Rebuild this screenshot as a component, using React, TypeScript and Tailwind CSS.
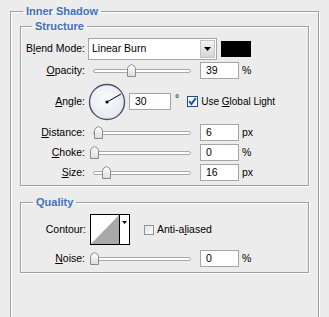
import React from 'react';

const font = { fontFamily: '"Liberation Sans", Arial, sans-serif' };

function Thumb({ left }: { left: number }) {
  return (
    <svg
      width="9"
      height="13"
      viewBox="0 0 9 13"
      className="absolute top-[1px]"
      style={{ left: left - 4 }}
    >
      <defs>
        <linearGradient id="thumbFill" x1="0" y1="0" x2="0" y2="1">
          <stop offset="0" stopColor="#ffffff" />
          <stop offset="1" stopColor="#dcdcdc" />
        </linearGradient>
      </defs>
      <path
        d="M0.5 12.5 L0.5 4.5 Q0.5 2 4.5 0.5 Q8.5 2 8.5 4.5 L8.5 12.5 Z"
        fill="url(#thumbFill)"
        stroke="#8a8a8a"
      />
    </svg>
  );
}

function Slider({ thumb }: { thumb: number }) {
  // thumb is the x position of the thumb centre, relative to the track start
  return (
    <div className="relative w-[106px] h-[15px] flex items-center">
      <div className="ml-[4px] w-[98px] h-[4px] rounded-full border border-[#a8a8a8] bg-white" />
      <Thumb left={4 + thumb} />
    </div>
  );
}

function NumBox({ value, w = 'w-[39px]' }: { value: string; w?: string }) {
  return (
    <div className={`${w} h-[17px] bg-white border border-[#a3a5aa] pl-[5px] flex items-center leading-none`}>
      {value}
    </div>
  );
}

function Label({ children, w = 'w-[64px]' }: { children: React.ReactNode; w?: string }) {
  return <div className={`${w} shrink-0 text-right`}>{children}</div>;
}

function SliderRow({
  label,
  thumb,
  value,
  unit,
}: {
  label: React.ReactNode;
  thumb: number;
  value: string;
  unit: string;
}) {
  return (
    <div className="flex items-center h-[17px]">
      <Label>{label}</Label>
      <div className="ml-[4px]">
        <Slider thumb={thumb} />
      </div>
      <div className="ml-[5px]">
        <NumBox value={value} />
      </div>
      <span className="ml-[3px]">{unit}</span>
    </div>
  );
}

function Legend({ children, className = '' }: { children: React.ReactNode; className?: string }) {
  return (
    <legend className={`px-[3px] text-[11px] font-bold leading-[14px] text-[#4470bc] ${className}`}>
      {children}
    </legend>
  );
}

const etched = 'border border-[#a0a0a0] shadow-[inset_1px_1px_0_#ffffff,1px_1px_0_#ffffff]';

function AngleDial() {
  return (
    <svg width="38" height="38" viewBox="0 0 38 38">
      <defs>
        <radialGradient id="dial" cx="0.45" cy="0.4" r="0.6">
          <stop offset="0" stopColor="#fbfbfb" />
          <stop offset="1" stopColor="#e6e8ee" />
        </radialGradient>
      </defs>
      <circle cx="19" cy="19" r="17.5" fill="url(#dial)" stroke="#46556f" strokeWidth="1.4" />
      <line x1="19" y1="19" x2="33" y2="11" stroke="#000" strokeWidth="1" />
      <circle cx="19" cy="19" r="1.6" fill="#000" />
    </svg>
  );
}

function CheckedBox() {
  return (
    <svg width="11" height="11" viewBox="0 0 11 11">
      <rect x="0.5" y="0.5" width="10" height="10" fill="#f6f8fb" stroke="#1d4f8a" />
      <path d="M2.2 5.2 L4.4 8 L8.8 2.2" fill="none" stroke="#2352a8" strokeWidth="2" />
    </svg>
  );
}

export default function App() {
  return (
    <div
      className="w-[329px] h-[317px] overflow-hidden bg-[#ececec] text-[10.5px] text-black"
      style={font}
    >
      <fieldset className={`ml-[10px] mt-[4px] w-[309px] h-[330px] px-[9px] ${etched}`}>
        <Legend className="ml-[3px]">Inner Shadow</Legend>

        {/* Structure */}
        <fieldset className={`mt-[1px] w-[289px] ${etched}`}>
          <Legend className="ml-[11px]">Structure</Legend>
          <div className="pt-[5px] pb-[4px] flex flex-col">
            <div className="flex items-center h-[22px]">
              <Label>
                B<u className="underline-offset-1">l</u>end Mode:
              </Label>
              <div className="ml-[3px] w-[129px] h-[22px] bg-white border border-[#a3a5aa] flex items-center justify-between pl-[3px] pr-[1px]">
                <span>Linear Burn</span>
                <div className="w-[15px] h-[18px] bg-gradient-to-b from-[#f3f3f3] to-[#d6d6d6] border border-[#c4c4c4] flex items-center justify-center">
                  <svg width="7" height="4" viewBox="0 0 7 4">
                    <path d="M0 0 L7 0 L3.5 4 Z" fill="#000" />
                  </svg>
                </div>
              </div>
              <div className="ml-[4px] w-[30px] h-[16px] bg-black" />
            </div>

            <div className="mt-[2px]">
              <SliderRow
                label={
                  <>
                    <u className="underline-offset-1">O</u>pacity:
                  </>
                }
                thumb={38}
                value="39"
                unit="%"
              />
            </div>

            <div className="mt-[4px] flex items-center h-[37px]">
              <Label>
                <u className="underline-offset-1">A</u>ngle:
              </Label>
              <div className="ml-[3px]">
                <AngleDial />
              </div>
              <div className="ml-[3px]">
                <NumBox value="30" w="w-[42px]" />
              </div>
              <span className="ml-[4px] -mt-[6px]">°</span>
              <div className="ml-[8px] flex items-center">
                <CheckedBox />
              </div>
              <span className="ml-[3px] text-[10px]">
                Use <u className="underline-offset-1">G</u>lobal Light
              </span>
            </div>

            <div className="mt-[4px]">
              <SliderRow
                label={
                  <>
                    <u className="underline-offset-1">D</u>istance:
                  </>
                }
                thumb={5}
                value="6"
                unit="px"
              />
            </div>
            <div className="mt-[3px]">
              <SliderRow
                label={
                  <>
                    <u className="underline-offset-1">C</u>hoke:
                  </>
                }
                thumb={1}
                value="0"
                unit="%"
              />
            </div>
            <div className="mt-[3px]">
              <SliderRow
                label={
                  <>
                    <u className="underline-offset-1">S</u>ize:
                  </>
                }
                thumb={13}
                value="16"
                unit="px"
              />
            </div>
          </div>
        </fieldset>

        {/* Quality */}
        <fieldset className={`mt-[9px] w-[289px] ${etched}`}>
          <Legend className="ml-[12px]">Quality</Legend>
          <div className="pt-[5px] pb-[5px] flex flex-col">
            <div className="flex items-center h-[31px]">
              <Label w="w-[65px]">Contour:</Label>
              <div className="ml-[4px] w-[40px] h-[31px] border border-black bg-white flex">
                <svg width="28" height="29" viewBox="0 0 28 29" className="shrink-0">
                  <polygon points="0,29 28,0 28,29" fill="#a9a9a9" />
                </svg>
                <div className="w-[1px] bg-black" />
                <div className="flex-1 flex justify-center pt-[6px]">
                  <svg width="5" height="3" viewBox="0 0 5 3">
                    <path d="M0 0 L5 0 L2.5 3 Z" fill="#000" />
                  </svg>
                </div>
              </div>
              <div className="ml-[14px] w-[10px] h-[10px] border border-[#8f9297] bg-gradient-to-br from-[#e4e6ea] to-[#fbfbfb]" />
              <span className="ml-[3px]">
                Anti-a<u className="underline-offset-1">l</u>iased
              </span>
            </div>
            <div className="mt-[5px]">
              <SliderRow
                label={
                  <>
                    <u className="underline-offset-1">N</u>oise:
                  </>
                }
                thumb={1}
                value="0"
                unit="%"
              />
            </div>
          </div>
        </fieldset>
      </fieldset>
    </div>
  );
}
